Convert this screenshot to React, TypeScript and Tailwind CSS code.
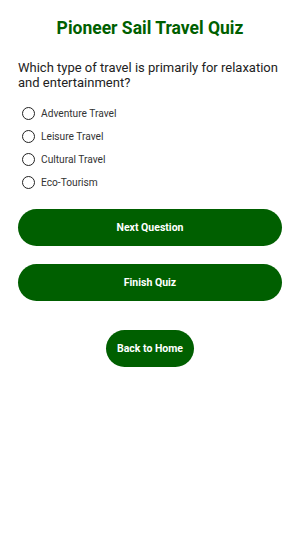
import React from "react";

export default function App() {
  const options = ["Adventure Travel", "Leisure Travel", "Cultural Travel", "Eco-Tourism"];
  return (
    <div className="w-[300px] h-[533px] bg-white px-[18px] flex flex-col" style={{ fontFamily: "Roboto, sans-serif" }}>
      <h1 className="mt-[17px] text-center text-[17.5px] leading-[22px] font-bold text-[#005f00]">Pioneer Sail Travel Quiz</h1>
      <p className="mt-[21px] text-[13px] leading-[15px] text-[#222]">
        Which type of travel is primarily for relaxation and entertainment?
      </p>
      <div className="mt-[17px] flex flex-col gap-[10px] pl-[4px]">
        {options.map((o) => (
          <label key={o} className="flex items-center h-[13px] gap-[6px]">
            <span className="w-[13px] h-[13px] rounded-full border-[1.5px] border-[#222] shrink-0" />
            <span className="text-[10.2px] text-[#333]">{o}</span>
          </label>
        ))}
      </div>
      <button className="mt-[20px] h-[37px] w-full rounded-full bg-[#005f00] text-white text-[10.5px] font-bold">
        Next Question
      </button>
      <button className="mt-[18px] h-[37px] w-full rounded-full bg-[#005f00] text-white text-[10.5px] font-bold">
        Finish Quiz
      </button>
      <div className="flex justify-center mt-[29px]">
        <button className="h-[37px] w-[88px] rounded-full bg-[#005f00] text-white text-[10.5px] font-bold">
          Back to Home
        </button>
      </div>
    </div>
  );
}
